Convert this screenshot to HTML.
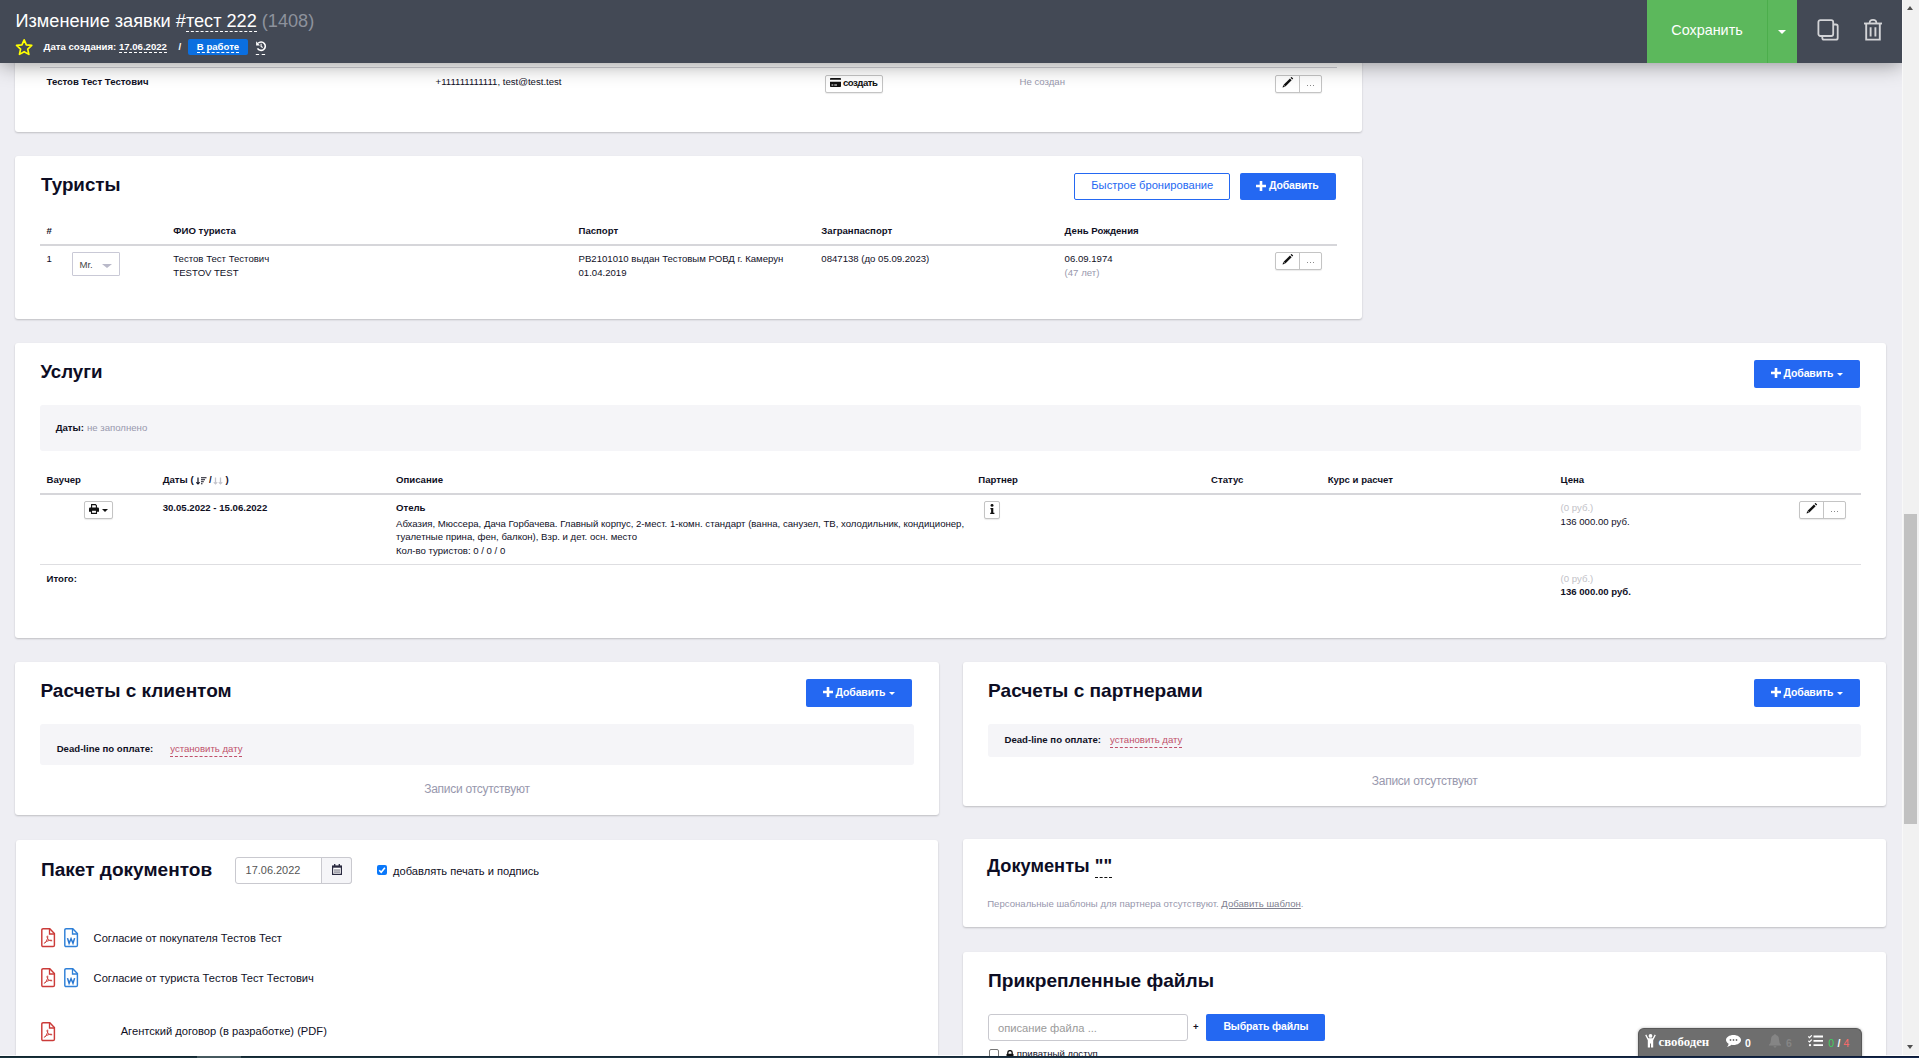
<!DOCTYPE html>
<html lang="ru">
<head>
<meta charset="utf-8">
<title>Изменение заявки #тест 222</title>
<style>
*{box-sizing:border-box;margin:0;padding:0}
html,body{width:1919px;height:1058px;overflow:hidden}
body{background:#eeeef3;font-family:"Liberation Sans",sans-serif;font-size:10px;color:#111;position:relative}
.a{position:absolute;white-space:nowrap}
.b{font-weight:bold}
.g{color:#999}
.card{position:absolute;background:#fff;border-radius:3px;box-shadow:0 1px 2px rgba(0,0,0,.2)}
.h2{position:absolute;white-space:nowrap;font-weight:bold;font-size:19px;line-height:24px;color:#111}
.t{position:absolute;white-space:nowrap;font-size:10px;line-height:14px}
.hl{position:absolute;height:2px;background:#ddd}
.hl1{position:absolute;height:1px;background:#ddd}
.btnb{position:absolute;background:#2468f2;color:#fff;font-weight:bold;font-size:11px;border-radius:2px;text-align:center;white-space:nowrap}
.btno{position:absolute;background:#fff;color:#2468f2;border:1px solid #2468f2;font-size:11px;border-radius:2px;text-align:center;white-space:nowrap}
.sb{position:absolute;background:#fff;border:1px solid #ccc;border-radius:2px;height:19px}
.bar{position:absolute;background:#f5f5f8;border-radius:3px}
.red{color:#c0506a;border-bottom:1px dashed #c0506a;padding-bottom:2px}
</style>
</head>
<body>

<!-- CARDS -->
<div class="card" id="c1" style="left:15px;top:-20px;width:1347px;height:152px"></div>
<div class="card" id="c2" style="left:15px;top:156px;width:1347px;height:163px"></div>
<div class="card" id="c3" style="left:15px;top:343px;width:1871px;height:295px"></div>
<div class="card" id="c4" style="left:15px;top:662px;width:924px;height:153px"></div>
<div class="card" id="c5" style="left:963px;top:662px;width:923px;height:144px"></div>
<div class="card" id="c6" style="left:16px;top:840px;width:922px;height:240px"></div>
<div class="card" id="c7" style="left:963px;top:839px;width:923px;height:88px"></div>
<div class="card" id="c8" style="left:963px;top:952px;width:923px;height:130px"></div>

<div style="position:absolute;left:0;top:1055px;width:1902px;height:1px;background:rgba(255,255,255,.8)"></div>
<div class="a" style="left:40px;top:67px;width:1297px;height:1px;background:#d0d0d6"></div>
<div class="a" id="c1name" style="left:46.6px;top:75px;font-size:9.6px;line-height:14px;font-weight:bold;color:#10101f;">Тестов Тест Тестович</div>
<div class="a" id="c1ph" style="left:435.6px;top:75px;font-size:9.6px;line-height:14px;color:#10101f;">+111111111111, test@test.test</div>
<div class="a" style="left:825px;top:75px;width:58px;height:18px;background:#fff;border:1px solid #c4c4c4;border-radius:2px;box-shadow:0 1px 1px rgba(0,0,0,.08)"></div>
<svg class="a" style="left:830px;top:78px" width="11" height="9" viewBox="0 0 11 9"><path d="M0.8 0 H10.2 Q11 0 11 0.8 V1.700 H0 V0.8 Q0 0 0.8 0 Z M0 3.700 H11 V8.200 Q11 9 10.2 9 H0.8 Q0 9 0 8.200 Z M1.500 6.500 V7.500 H3.300 V6.500 Z M4.300 6.500 V7.500 H7 V6.500 Z" fill="#111" fill-rule="evenodd"/></svg>
<div class="a" id="c1btn" style="left:843px;top:76px;font-size:9.6px;line-height:14px;font-weight:bold;color:#111;letter-spacing:-0.5px;">создать</div>
<div class="a" id="c1ns" style="left:1019.5px;top:75px;font-size:9.6px;line-height:14px;color:#9898ad;">Не создан</div>
<div class="a" style="left:1275px;top:75px;width:47px;height:18px;background:#fff;border:1px solid #c4c4c4;border-radius:2px;box-shadow:0 1px 1px rgba(0,0,0,.08)"></div>
<div class="a" style="left:1299px;top:75px;width:1px;height:18px;background:#c4c4c4"></div>
<svg class="a" style="left:1281.5px;top:76.8px" width="12" height="12" viewBox="0 0 12 12"><path d="M0.5 10.600 L1.300 8.100 L3 9.800 Z" fill="#111"/><path d="M1.650 7.750 L7.950 1.450 L9.650 3.150 L3.350 9.450 Z" fill="#111"/><path d="M8.550 0.850 L9.500 -0.100 L11.200 1.600 L10.250 2.550 Z" fill="#111"/></svg>
<div class="a" style="left:1307px;top:85px;width:1px;height:1px;background:#8a8a8a"></div>
<div class="a" style="left:1310px;top:85px;width:1px;height:1px;background:#8a8a8a"></div>
<div class="a" style="left:1313px;top:85px;width:1px;height:1px;background:#8a8a8a"></div>
<div class="a" id="h_tur" style="left:41px;top:172px;font-size:18.75px;line-height:26px;font-weight:bold;color:#0d0d24;">Туристы</div>
<div class="a" style="left:1074px;top:173px;width:156px;height:27px;background:#fff;border:1px solid #2468f2;border-radius:2px"></div>
<div class="a" id="qb" style="left:1091.3px;top:177px;font-size:11.16px;line-height:16px;color:#2468f2;">Быстрое бронирование</div>
<div class="a" style="left:1240px;top:173px;width:96px;height:27px;background:#2468f2;border-radius:2px"></div>
<svg class="a" style="left:1256.2px;top:181px" width="10" height="10" viewBox="0 0 10 10"><path d="M3.700 0 H6.300 V3.700 H10 V6.300 H6.300 V10 H3.700 V6.300 H0 V3.700 H3.700 Z" fill="#fff"/></svg>
<div class="a" style="left:1269px;top:178px;font-size:10.5px;line-height:15px;font-weight:bold;color:#fff;letter-spacing:-0.15px;">Добавить</div>
<div class="a" style="left:46.6px;top:224px;font-size:9.6px;line-height:14px;font-weight:bold;color:#10101f;">#</div>
<div class="a" style="left:173.3px;top:224px;font-size:9.6px;line-height:14px;font-weight:bold;color:#10101f;">ФИО туриста</div>
<div class="a" style="left:578.5px;top:224px;font-size:9.6px;line-height:14px;font-weight:bold;color:#10101f;">Паспорт</div>
<div class="a" style="left:821.3px;top:224px;font-size:9.6px;line-height:14px;font-weight:bold;color:#10101f;">Загранпаспорт</div>
<div class="a" style="left:1064.6px;top:224px;font-size:9.6px;line-height:14px;font-weight:bold;color:#10101f;">День Рождения</div>
<div class="a" style="left:40px;top:244px;width:1297px;height:2px;background:#d6d6da"></div>
<div class="a" style="left:46.6px;top:252px;font-size:9.6px;line-height:14px;color:#10101f;">1</div>
<div class="a" style="left:72px;top:252px;width:48px;height:24px;background:#fff;border:1px solid #c9c9d6;border-radius:1px"></div>
<div class="a" style="left:79.4px;top:258px;font-size:9.6px;line-height:14px;color:#444;">Mr.</div>
<div class="a" style="left:102px;top:264px;width:0px;height:0px;border-left:5px solid transparent;border-right:5px solid transparent;border-top:4px solid #b9b9c9"></div>
<div class="a" style="left:173.3px;top:252px;font-size:9.6px;line-height:14px;color:#10101f;">Тестов Тест Тестович</div>
<div class="a" style="left:173.3px;top:266px;font-size:9.6px;line-height:14px;color:#10101f;">TESTOV TEST</div>
<div class="a" id="pass" style="left:578.5px;top:252px;font-size:9.6px;line-height:14px;color:#10101f;">РВ2101010 выдан Тестовым РОВД г. Камерун</div>
<div class="a" style="left:578.5px;top:266px;font-size:9.6px;line-height:14px;color:#10101f;">01.04.2019</div>
<div class="a" style="left:821.3px;top:252px;font-size:9.6px;line-height:14px;color:#10101f;">0847138 (до 05.09.2023)</div>
<div class="a" style="left:1064.6px;top:252px;font-size:9.6px;line-height:14px;color:#10101f;">06.09.1974</div>
<div class="a" style="left:1064.6px;top:266px;font-size:9.6px;line-height:14px;color:#9898ad;">(47 лет)</div>
<div class="a" style="left:1275px;top:252px;width:47px;height:18px;background:#fff;border:1px solid #c4c4c4;border-radius:2px;box-shadow:0 1px 1px rgba(0,0,0,.08)"></div>
<div class="a" style="left:1299px;top:252px;width:1px;height:18px;background:#c4c4c4"></div>
<svg class="a" style="left:1281.5px;top:253.8px" width="12" height="12" viewBox="0 0 12 12"><path d="M0.5 10.600 L1.300 8.100 L3 9.800 Z" fill="#111"/><path d="M1.650 7.750 L7.950 1.450 L9.650 3.150 L3.350 9.450 Z" fill="#111"/><path d="M8.550 0.850 L9.500 -0.100 L11.200 1.600 L10.250 2.550 Z" fill="#111"/></svg>
<div class="a" style="left:1307px;top:262px;width:1px;height:1px;background:#8a8a8a"></div>
<div class="a" style="left:1310px;top:262px;width:1px;height:1px;background:#8a8a8a"></div>
<div class="a" style="left:1313px;top:262px;width:1px;height:1px;background:#8a8a8a"></div>
<div class="a" id="h_usl" style="left:40.4px;top:359px;font-size:18.7px;line-height:26px;font-weight:bold;color:#0d0d24;">Услуги</div>
<div class="a" style="left:1754px;top:360px;width:106px;height:28px;background:#2468f2;border-radius:2px"></div>
<svg class="a" style="left:1771px;top:368px" width="10" height="10" viewBox="0 0 10 10"><path d="M3.700 0 H6.300 V3.700 H10 V6.300 H6.300 V10 H3.700 V6.300 H0 V3.700 H3.700 Z" fill="#fff"/></svg>
<div class="a" style="left:1783.6px;top:366px;font-size:10.5px;line-height:15px;font-weight:bold;color:#fff;letter-spacing:-0.15px;">Добавить</div>
<div class="a" style="left:1837.1px;top:372.5px;width:0px;height:0px;border-left:3px solid transparent;border-right:3px solid transparent;border-top:3px solid #fff"></div>
<div class="a" style="left:40px;top:405px;width:1821px;height:46px;background:#f5f5f8;border-radius:3px"></div>
<div class="a" style="left:55.7px;top:421px;font-size:9.6px;line-height:14px;font-weight:bold;color:#10101f;">Даты:</div>
<div class="a" style="left:87px;top:421px;font-size:9.6px;line-height:14px;color:#9898ad;">не заполнено</div>
<div class="a" style="left:46.6px;top:473px;font-size:9.6px;line-height:14px;font-weight:bold;color:#10101f;">Ваучер</div>
<div class="a" style="left:162.7px;top:473px;font-size:9.6px;line-height:14px;font-weight:bold;color:#10101f;">Даты (</div>
<svg class="a" style="left:196px;top:476.500px" width="11" height="8" viewBox="0 0 11 10" preserveAspectRatio="none"><path d="M2 0.5 V8.500 M0.3 6.500 L2 8.700 L3.700 6.500" stroke="#10101f" stroke-width="1.2" fill="none"/><path d="M5 1 H10.500 M5 3.500 H9 M5 6 H7.800 M5 8.500 H6.500" stroke="#10101f" stroke-width="1.100" fill="none"/></svg>
<div class="a" style="left:209px;top:473px;font-size:9.6px;line-height:14px;font-weight:bold;color:#10101f;">/</div>
<svg class="a" style="left:213px;top:476.500px" width="11" height="8" viewBox="0 0 11 10" preserveAspectRatio="none"><path d="M2.500 0.5 V8.500 M0.8 6.500 L2.500 8.700 L4.200 6.500 M7.500 0.5 V8.500 M5.800 6.500 L7.500 8.700 L9.200 6.500" stroke="#c4c4cc" stroke-width="1.3" fill="none"/></svg>
<div class="a" style="left:225.5px;top:473px;font-size:9.6px;line-height:14px;font-weight:bold;color:#10101f;">)</div>
<div class="a" style="left:396px;top:473px;font-size:9.6px;line-height:14px;font-weight:bold;color:#10101f;">Описание</div>
<div class="a" style="left:978.3px;top:473px;font-size:9.6px;line-height:14px;font-weight:bold;color:#10101f;">Партнер</div>
<div class="a" style="left:1211px;top:473px;font-size:9.6px;line-height:14px;font-weight:bold;color:#10101f;">Статус</div>
<div class="a" style="left:1327.7px;top:473px;font-size:9.6px;line-height:14px;font-weight:bold;color:#10101f;">Курс и расчет</div>
<div class="a" style="left:1560.6px;top:473px;font-size:9.6px;line-height:14px;font-weight:bold;color:#10101f;">Цена</div>
<div class="a" style="left:40px;top:493px;width:1821px;height:2px;background:#d6d6da"></div>
<div class="a" style="left:84px;top:501px;width:29px;height:18px;background:#fff;border:1px solid #c4c4c4;border-radius:2px;box-shadow:0 1px 1px rgba(0,0,0,.08)"></div>
<svg class="a" style="left:89px;top:504px" width="10" height="10" viewBox="0 0 10 10"><path d="M2.600 4 V0.600 H6.400 L7.400 1.600 V4" fill="#fff" stroke="#111" stroke-width="1.100"/><path d="M1.100 3.600 H8.900 Q10 3.600 10 4.700 V7.700 H8 V6.300 H2 V7.700 H0 V4.700 Q0 3.600 1.100 3.600 Z" fill="#111"/><path d="M2.500 6.300 H7.500 V9.400 H2.500 Z" fill="#fff" stroke="#111" stroke-width="1.100"/></svg>
<div class="a" style="left:102px;top:509.2px;width:0px;height:0px;border-left:3px solid transparent;border-right:3px solid transparent;border-top:3px solid #111"></div>
<div class="a" id="dates" style="left:162.7px;top:501px;font-size:9.6px;line-height:14px;font-weight:bold;color:#10101f;">30.05.2022 - 15.06.2022</div>
<div class="a" style="left:396px;top:501px;font-size:9.6px;line-height:14px;font-weight:bold;color:#10101f;">Отель</div>
<div class="a" id="d1" style="left:396px;top:517px;font-size:9.6px;line-height:14px;color:#10101f;">Абхазия, Мюссера, Дача Горбачева. Главный корпус, 2-мест. 1-комн. стандарт (ванна, санузел, ТВ, холодильник, кондиционер,</div>
<div class="a" id="d2" style="left:396px;top:530px;font-size:9.6px;line-height:14px;color:#10101f;">туалетные прина, фен, балкон), Взр. и дет. осн. место</div>
<div class="a" style="left:396px;top:544px;font-size:9.6px;line-height:14px;color:#10101f;">Кол-во туристов: 0 / 0 / 0</div>
<div class="a" style="left:984px;top:501px;width:16px;height:18px;background:#fff;border:1px solid #c4c4c4;border-radius:2px;box-shadow:0 1px 1px rgba(0,0,0,.08)"></div>
<svg class="a" style="left:989.600px;top:504px" width="5" height="10" viewBox="0 0 5 10"><circle cx="2.050" cy="1.400" r="1.450" fill="#111"/><path d="M0.4 4 H3.300 V8.700 H4.400 V9.900 H0.2 V8.700 H1.100 V5.200 H0.4 Z" fill="#111"/></svg>
<div class="a" style="left:1560.6px;top:501px;font-size:9.6px;line-height:14px;color:#c2c2c8;">(0 руб.)</div>
<div class="a" id="pr1" style="left:1560.6px;top:515px;font-size:9.6px;line-height:14px;color:#10101f;">136 000.00 руб.</div>
<div class="a" style="left:1799px;top:501px;width:47px;height:18px;background:#fff;border:1px solid #c4c4c4;border-radius:2px;box-shadow:0 1px 1px rgba(0,0,0,.08)"></div>
<div class="a" style="left:1823px;top:501px;width:1px;height:18px;background:#c4c4c4"></div>
<svg class="a" style="left:1805.5px;top:502.8px" width="12" height="12" viewBox="0 0 12 12"><path d="M0.5 10.600 L1.300 8.100 L3 9.800 Z" fill="#111"/><path d="M1.650 7.750 L7.950 1.450 L9.650 3.150 L3.350 9.450 Z" fill="#111"/><path d="M8.550 0.850 L9.500 -0.100 L11.200 1.600 L10.250 2.550 Z" fill="#111"/></svg>
<div class="a" style="left:1831px;top:511px;width:1px;height:1px;background:#8a8a8a"></div>
<div class="a" style="left:1834px;top:511px;width:1px;height:1px;background:#8a8a8a"></div>
<div class="a" style="left:1837px;top:511px;width:1px;height:1px;background:#8a8a8a"></div>
<div class="a" style="left:40px;top:564px;width:1821px;height:1px;background:#dedee1"></div>
<div class="a" style="left:46.6px;top:572px;font-size:9.6px;line-height:14px;font-weight:bold;color:#10101f;">Итого:</div>
<div class="a" style="left:1560.6px;top:572px;font-size:9.6px;line-height:14px;color:#c2c2c8;">(0 руб.)</div>
<div class="a" id="pr2" style="left:1560.6px;top:585px;font-size:9.6px;line-height:14px;font-weight:bold;color:#10101f;">136 000.00 руб.</div>
<div class="a" id="h_rk" style="left:40.4px;top:678px;font-size:19.03px;line-height:26px;font-weight:bold;color:#0d0d24;">Расчеты с клиентом</div>
<div class="a" style="left:806px;top:679px;width:106px;height:28px;background:#2468f2;border-radius:2px"></div>
<svg class="a" style="left:823px;top:687px" width="10" height="10" viewBox="0 0 10 10"><path d="M3.700 0 H6.300 V3.700 H10 V6.300 H6.300 V10 H3.700 V6.300 H0 V3.700 H3.700 Z" fill="#fff"/></svg>
<div class="a" style="left:835.6px;top:685px;font-size:10.5px;line-height:15px;font-weight:bold;color:#fff;letter-spacing:-0.15px;">Добавить</div>
<div class="a" style="left:889.1px;top:691.5px;width:0px;height:0px;border-left:3px solid transparent;border-right:3px solid transparent;border-top:3px solid #fff"></div>
<div class="a" style="left:40px;top:724px;width:874px;height:41px;background:#f5f5f8;border-radius:3px"></div>
<div class="a" id="dl1" style="left:56.7px;top:742px;font-size:9.6px;line-height:14px;font-weight:bold;color:#10101f;">Dead-line по оплате:</div>
<div class="a" style="left:170.2px;top:742px;font-size:9.6px;line-height:14px;color:#c0506a;"><span class="red">установить дату</span></div>
<div class="a" id="za1" style="left:424.2px;top:781px;font-size:12px;line-height:17px;color:#9898ad;letter-spacing:-0.26px;">Записи отсутствуют</div>
<div class="a" id="h_rp" style="left:988.1px;top:678px;font-size:19.08px;line-height:26px;font-weight:bold;color:#0d0d24;">Расчеты с партнерами</div>
<div class="a" style="left:1754px;top:679px;width:106px;height:28px;background:#2468f2;border-radius:2px"></div>
<svg class="a" style="left:1771px;top:687px" width="10" height="10" viewBox="0 0 10 10"><path d="M3.700 0 H6.300 V3.700 H10 V6.300 H6.300 V10 H3.700 V6.300 H0 V3.700 H3.700 Z" fill="#fff"/></svg>
<div class="a" style="left:1783.6px;top:685px;font-size:10.5px;line-height:15px;font-weight:bold;color:#fff;letter-spacing:-0.15px;">Добавить</div>
<div class="a" style="left:1837.1px;top:691.5px;width:0px;height:0px;border-left:3px solid transparent;border-right:3px solid transparent;border-top:3px solid #fff"></div>
<div class="a" style="left:988px;top:724px;width:873px;height:33px;background:#f5f5f8;border-radius:3px"></div>
<div class="a" style="left:1004.5px;top:733px;font-size:9.6px;line-height:14px;font-weight:bold;color:#10101f;">Dead-line по оплате:</div>
<div class="a" style="left:1110.1px;top:733px;font-size:9.6px;line-height:14px;color:#c0506a;"><span class="red">установить дату</span></div>
<div class="a" id="za2" style="left:1371.7px;top:773px;font-size:12px;line-height:17px;color:#9898ad;letter-spacing:-0.24px;">Записи отсутствуют</div>
<div class="a" id="h_pd" style="left:41px;top:857px;font-size:19.07px;line-height:26px;font-weight:bold;color:#0d0d24;">Пакет документов</div>
<div class="a" style="left:235px;top:857px;width:117px;height:27px;background:#fff;border:1px solid #c9c9cf;border-radius:3px"></div>
<div class="a" style="left:321px;top:857px;width:31px;height:27px;background:#f5f5f8;border:1px solid #c9c9cf;border-radius:0 3px 3px 0"></div>
<div class="a" id="inpd" style="left:245.6px;top:862px;font-size:10.95px;line-height:16px;color:#555;">17.06.2022</div>
<svg class="a" style="left:332px;top:864px" width="10" height="11" viewBox="0 0 10 11"><path d="M0.600 2.200 H9.400 V10.400 H0.600 Z" fill="#fff" stroke="#2a2a40" stroke-width="1.200"/><path d="M0.300 1.800 H9.700 V3.700 H0.300 Z" fill="#2a2a40"/><path d="M2.700 0 V2 M7.300 0 V2" stroke="#2a2a40" stroke-width="1.300"/><path d="M3 5.300 V8.900 M5 5.300 V8.900 M7 5.300 V8.900" stroke="#2a2a40" stroke-width="0.950"/><path d="M1.500 7.100 H8.500" stroke="#fff" stroke-width="0.5"/></svg>
<div class="a" style="left:377px;top:865px;width:10px;height:10px;background:#0a78fa;border-radius:2px"></div>
<svg class="a" style="left:377px;top:865px" width="10" height="10" viewBox="0 0 10 10"><path d="M2.200 5.200 L4.200 7.200 L7.900 2.800" stroke="#fff" stroke-width="1.600" fill="none"/></svg>
<div class="a" id="cb1" style="left:393px;top:863px;font-size:11.14px;line-height:16px;color:#10101f;">добавлять печать и подпись</div>
<svg class="a" style="left:40.7px;top:928px" width="15" height="20" viewBox="0 0 15 20"><path d="M2.100 0.8 H8.800 L13.400 5.600 V17.200 Q13.400 18.500 12.100 18.500 H2.100 Q0.8 18.500 0.8 17.200 V2.100 Q0.8 0.8 2.100 0.8 Z" fill="#fff" stroke="#cb3b39" stroke-width="1.450"/><path d="M8.500 1 V6 H13.200" fill="none" stroke="#cb3b39" stroke-width="1.300"/><path d="M3.300 15.300 Q5.600 13.600 6.500 10.600 Q7.100 8.300 6.500 7.800 Q5.800 7.900 6.200 9.600 Q6.900 11.800 8.700 12.500 Q10.300 13.100 11.100 12.700 Q10.700 11.900 8.500 12.300 Q5.500 13 3.300 15.300 Z" fill="none" stroke="#cb3b39" stroke-width="0.950"/></svg>
<svg class="a" style="left:63.5px;top:928px" width="15" height="20" viewBox="0 0 15 20"><path d="M2.100 0.8 H8.800 L13.400 5.600 V17.200 Q13.400 18.500 12.100 18.500 H2.100 Q0.8 18.500 0.8 17.200 V2.100 Q0.8 0.8 2.100 0.8 Z" fill="#fff" stroke="#2f80d8" stroke-width="1.450"/><path d="M8.500 1 V6 H13.200" fill="none" stroke="#2f80d8" stroke-width="1.300"/><path d="M3.500 10.100 L5.100 15.300 L7.050 10.700 L9 15.300 L10.600 10.100" fill="none" stroke="#2a78d2" stroke-width="1.500" stroke-linejoin="miter"/></svg>
<div class="a" id="doc1" style="left:93.6px;top:930px;font-size:11.15px;line-height:16px;color:#10101f;">Согласие от покупателя Тестов Тест</div>
<svg class="a" style="left:40.7px;top:968px" width="15" height="20" viewBox="0 0 15 20"><path d="M2.100 0.8 H8.800 L13.400 5.600 V17.200 Q13.400 18.500 12.100 18.500 H2.100 Q0.8 18.500 0.8 17.200 V2.100 Q0.8 0.8 2.100 0.8 Z" fill="#fff" stroke="#cb3b39" stroke-width="1.450"/><path d="M8.500 1 V6 H13.200" fill="none" stroke="#cb3b39" stroke-width="1.300"/><path d="M3.300 15.300 Q5.600 13.600 6.500 10.600 Q7.100 8.300 6.500 7.800 Q5.800 7.900 6.200 9.600 Q6.900 11.800 8.700 12.500 Q10.300 13.100 11.100 12.700 Q10.700 11.900 8.500 12.300 Q5.500 13 3.300 15.300 Z" fill="none" stroke="#cb3b39" stroke-width="0.950"/></svg>
<svg class="a" style="left:63.5px;top:968px" width="15" height="20" viewBox="0 0 15 20"><path d="M2.100 0.8 H8.800 L13.400 5.600 V17.200 Q13.400 18.500 12.100 18.500 H2.100 Q0.8 18.500 0.8 17.200 V2.100 Q0.8 0.8 2.100 0.8 Z" fill="#fff" stroke="#2f80d8" stroke-width="1.450"/><path d="M8.500 1 V6 H13.200" fill="none" stroke="#2f80d8" stroke-width="1.300"/><path d="M3.500 10.100 L5.100 15.300 L7.050 10.700 L9 15.300 L10.600 10.100" fill="none" stroke="#2a78d2" stroke-width="1.500" stroke-linejoin="miter"/></svg>
<div class="a" id="doc2" style="left:93.6px;top:970px;font-size:11.15px;line-height:16px;color:#10101f;">Согласие от туриста Тестов Тест Тестович</div>
<svg class="a" style="left:40.7px;top:1022px" width="15" height="20" viewBox="0 0 15 20"><path d="M2.100 0.8 H8.800 L13.400 5.600 V17.200 Q13.400 18.500 12.100 18.500 H2.100 Q0.8 18.500 0.8 17.200 V2.100 Q0.8 0.8 2.100 0.8 Z" fill="#fff" stroke="#cb3b39" stroke-width="1.450"/><path d="M8.500 1 V6 H13.200" fill="none" stroke="#cb3b39" stroke-width="1.300"/><path d="M3.300 15.300 Q5.600 13.600 6.500 10.600 Q7.100 8.300 6.500 7.800 Q5.800 7.900 6.200 9.600 Q6.900 11.800 8.700 12.500 Q10.300 13.100 11.100 12.700 Q10.700 11.900 8.500 12.300 Q5.500 13 3.300 15.300 Z" fill="none" stroke="#cb3b39" stroke-width="0.950"/></svg>
<div class="a" id="doc3" style="left:120.7px;top:1023px;font-size:11.15px;line-height:16px;color:#10101f;">Агентский договор (в разработке) (PDF)</div>
<div class="a" id="h_doc" style="left:987px;top:853px;font-size:18.27px;line-height:26px;font-weight:bold;color:#0d0d24;">Документы <span style="border-bottom:1px dashed #111;padding-bottom:1px">""</span></div>
<div class="a" id="pers" style="left:987.2px;top:897px;font-size:9.6px;line-height:14px;color:#9898ad;">Персональные шаблоны для партнера отсутствуют. <span style="text-decoration:underline;color:#80808f">Добавить шаблон</span>.</div>
<div class="a" id="h_pf" style="left:988px;top:968px;font-size:19.13px;line-height:26px;font-weight:bold;color:#0d0d24;">Прикрепленные файлы</div>
<div class="a" style="left:988px;top:1014px;width:200px;height:27px;background:#fff;border:1px solid #c9c9cf;border-radius:3px"></div>
<div class="a" id="ph" style="left:998px;top:1020px;font-size:11.19px;line-height:16px;color:#9a9a9a;">описание файла ...</div>
<div class="a" style="left:1193px;top:1020px;font-size:9.6px;line-height:14px;font-weight:bold;color:#10101f;">+</div>
<div class="a" style="left:1206px;top:1014px;width:119px;height:27px;background:#2468f2;border-radius:2px"></div>
<div class="a" id="vf" style="left:1223.4px;top:1019px;font-size:10.5px;line-height:15px;font-weight:bold;color:#fff;letter-spacing:-0.15px;">Выбрать файлы</div>
<div class="a" style="left:988.5px;top:1049px;width:10px;height:10px;background:#fff;border:1px solid #767676;border-radius:2px"></div>
<svg class="a" style="left:1006px;top:1050px" width="8" height="9" viewBox="0 0 8 9"><path d="M1.800 4 V2.800 A2.200 2.200 0 0 1 6.200 2.800 V4" fill="none" stroke="#111" stroke-width="1.300"/><rect x="0.5" y="3.800" width="7" height="5.200" rx="0.8" fill="#111"/></svg>
<div class="a" style="left:1016.8px;top:1047px;font-size:9.6px;line-height:14px;color:#10101f;">приватный доступ</div>
<!-- CARD2 CONTENT -->
<!-- CARD3 CONTENT -->
<!-- CARD4 CONTENT -->
<!-- CARD5 CONTENT -->
<!-- CARD6 CONTENT -->
<!-- CARD7 CONTENT -->
<!-- CARD8 CONTENT -->

<!-- HEADER -->
<div id="hdr" style="position:absolute;left:0;top:0;width:1902px;height:63px;background:#434955;box-shadow:0 1px 20px rgba(0,0,0,.42)"></div>
<div class="a" id="ttl" style="left:15.5px;top:9px;font-size:18.15px;line-height:24px;color:#fff">Изменение заявки #<span style="border-bottom:1px dashed #fff;padding-bottom:0">тест 222</span> <span style="color:#8d929c">(1408)</span></div>
<svg class="a" style="left:14px;top:37px" width="21" height="20" viewBox="0 0 21 20"><path d="M10.15 2.90 L12.35 7.87 L17.76 8.43 L13.72 12.06 L14.85 17.37 L10.15 14.65 L5.45 17.37 L6.58 12.06 L2.54 8.43 L7.95 7.87 Z" fill="none" stroke="#ffff00" stroke-width="1.7" stroke-linejoin="round"/></svg>
<div class="a b" id="dt" style="left:43.6px;top:40px;font-size:9.6px;line-height:14px;color:#fff">Дата создания: <span style="border-bottom:1px dashed #fff">17.06.2022</span></div>
<div class="a b" style="left:178.5px;top:40px;font-size:9.6px;line-height:14px;color:#fff">/</div>
<div class="a b" id="bdg" style="left:188px;top:39px;width:60px;height:16px;background:#0b6fe0;border-radius:2px;color:#fff;font-size:9.6px;line-height:16px;text-align:center"><span style="border-bottom:1px dashed #fff">В работе</span></div>
<svg class="a" style="left:255px;top:40px" width="12" height="16" viewBox="0 0 12 16"><path d="M3.1 3.2 A4.2 4.2 0 1 1 2.5 8.300" fill="none" stroke="#fff" stroke-width="1.600"/><path d="M1.1 1.300 L1.1 5.400 L4.900 5.400 Z" fill="#fff"/><path d="M6.100 3.700 V6.400 L7.700 7.500" fill="none" stroke="#fff" stroke-width="1.100"/><path d="M0.8 14.500 H4.100 M6.700 14.500 H10.100" stroke="#fff" stroke-width="1.200"/></svg>
<div class="a" style="left:1647px;top:0;width:150px;height:63px;background:#5cb85c"></div>
<div class="a" style="left:1767px;top:0;width:1px;height:63px;background:#4cae4c"></div>
<div class="a" id="sv" style="left:1647px;top:19px;width:120px;text-align:center;font-size:14.4px;line-height:22px;color:#fff">Сохранить</div>
<div class="a" style="left:1778px;top:30px;width:0;height:0;border-left:4.5px solid transparent;border-right:4.5px solid transparent;border-top:4.5px solid #fff"></div>
<svg class="a" style="left:1815px;top:17px" width="26" height="26" viewBox="0 0 26 26"><rect x="3.400" y="3.100" width="14.800" height="15.900" rx="2" fill="none" stroke="#d3d4d7" stroke-width="1.800"/><path d="M18.200 7.500 H21 Q22.700 7.500 22.700 9.200 V21 Q22.700 22.700 21 22.700 H9 Q7.300 22.700 7.300 21 V19" fill="none" stroke="#d3d4d7" stroke-width="1.800"/></svg>
<svg class="a" style="left:1862px;top:17px" width="22" height="26" viewBox="0 0 22 26"><path d="M2 6.500 H20" stroke="#d3d4d7" stroke-width="1.900" fill="none"/><path d="M7.600 6.200 Q7.600 2.900 11 2.900 Q14.400 2.900 14.400 6.200" stroke="#d3d4d7" stroke-width="1.700" fill="none"/><path d="M4.200 7 V22.600 H17.800 V7" stroke="#d3d4d7" stroke-width="1.900" fill="none"/><path d="M8.600 10.300 V19.600 M13.400 10.300 V19.600" stroke="#d3d4d7" stroke-width="1.900" fill="none"/></svg>


<div class="a" style="left:1637.5px;top:1028px;width:224.5px;height:30px;background:#6e6e6e;border:1px solid #585858;border-bottom:0;border-radius:6px 6px 0 0;box-shadow:0 0 3px rgba(0,0,0,.3)"></div>
<svg class="a" style="left:1645px;top:1034px" width="11" height="14" viewBox="0 0 11 14"><circle cx="5.500" cy="1.900" r="1.900" fill="#fff"/><path d="M0.2 1.200 L1.300 0.6 L3.300 4.200 H7.700 L9.700 0.6 L10.800 1.200 L8.200 6.200 V13.500 H6 V9.500 H5 V13.500 H2.800 V6.200 Z" fill="#fff"/></svg>
<div class="a" id="svb" style="left:1658.500px;top:1035.4px;font-family:'Liberation Serif','DejaVu Serif',serif;font-weight:bold;font-size:12.8px;line-height:15px;color:#fff">свободен</div>
<svg class="a" style="left:1725.500px;top:1035px" width="15" height="12" viewBox="0 0 15 12"><path d="M7.500 0 C11.600 0 15 2.200 15 5 C15 7.800 11.600 10 7.500 10 C6.800 10 6.100 9.900 5.500 9.800 C4.300 10.900 2.800 11.600 1 11.900 C1.900 11 2.500 10 2.600 8.800 C1 7.900 0 6.500 0 5 C0 2.200 3.400 0 7.500 0 Z" fill="#fff"/><circle cx="4.500" cy="5" r="0.9" fill="#6e6e6e"/><circle cx="7.500" cy="5" r="0.9" fill="#6e6e6e"/><circle cx="10.500" cy="5" r="0.9" fill="#6e6e6e"/></svg>
<div class="a" style="left:1745px;top:1036px;font-size:10.5px;line-height:15px;font-weight:bold;color:#fff;">0</div>
<svg class="a" style="left:1768.500px;top:1034px" width="12" height="14" viewBox="0 0 12 14"><path d="M6 0 Q6.800 0 6.900 1 Q10 1.800 10 5.500 Q10 9 12 10.800 V11.500 H0 V10.800 Q2 9 2 5.500 Q2 1.800 5.100 1 Q5.200 0 6 0 Z M4.500 12.200 H7.500 Q7.300 13.600 6 13.600 Q4.700 13.600 4.500 12.200 Z" fill="#858585"/></svg>
<div class="a" style="left:1786px;top:1036px;font-size:10.5px;line-height:15px;font-weight:bold;color:#858585;">6</div>
<svg class="a" style="left:1808px;top:1035px" width="15" height="12" viewBox="0 0 15 12"><path d="M5.500 1.500 H15 M5.500 5.800 H15 M5.500 10.100 H15" stroke="#fff" stroke-width="1.800" fill="none"/><path d="M0.3 1.500 L1.500 2.700 L3.800 0.3 M0.3 5.800 L1.500 7 L3.800 4.600" stroke="#fff" stroke-width="1.200" fill="none"/><circle cx="2" cy="10.100" r="1.200" fill="#fff"/></svg>
<div class="a" style="left:1828.3px;top:1036px;font-size:10.5px;line-height:15px;color:#42d060;">0</div>
<div class="a" style="left:1837.5px;top:1036px;font-size:10.5px;line-height:15px;font-weight:bold;color:#fff;">/</div>
<div class="a" style="left:1843.6px;top:1036px;font-size:10.5px;line-height:15px;color:#ff6a6a;">4</div>
<!-- SCROLLBAR -->
<div style="position:absolute;left:1902px;top:0;width:17px;height:1058px;background:#f1f1f1;border-left:1px solid #f8f8f8"></div>
<div style="position:absolute;left:1904px;top:514px;width:13px;height:310px;background:#c1c1c1"></div>
<div class="a" style="left:1907px;top:6px;width:0;height:0;border-left:3.5px solid transparent;border-right:3.5px solid transparent;border-bottom:4px solid #505050"></div>
<div class="a" style="left:1907px;top:1045px;width:0;height:0;border-left:3.5px solid transparent;border-right:3.5px solid transparent;border-top:4px solid #505050"></div>
<!-- BOTTOM STRIP -->
<div style="position:absolute;left:1902px;top:1055px;width:17px;height:1px;background:rgba(255,255,255,.85)"></div>
<div style="position:absolute;left:0;top:1056px;width:1919px;height:1px;background:linear-gradient(90deg,#10262f,#142838 50%,#0b1a38)"></div>
<div style="position:absolute;left:0;top:1057px;width:1919px;height:1px;background:linear-gradient(90deg,#1a323b,#213543 50%,#14264a)"></div>
<div style="position:absolute;left:197px;top:1056px;width:44px;height:2px;background:#46595f"></div>
</body>
</html>
